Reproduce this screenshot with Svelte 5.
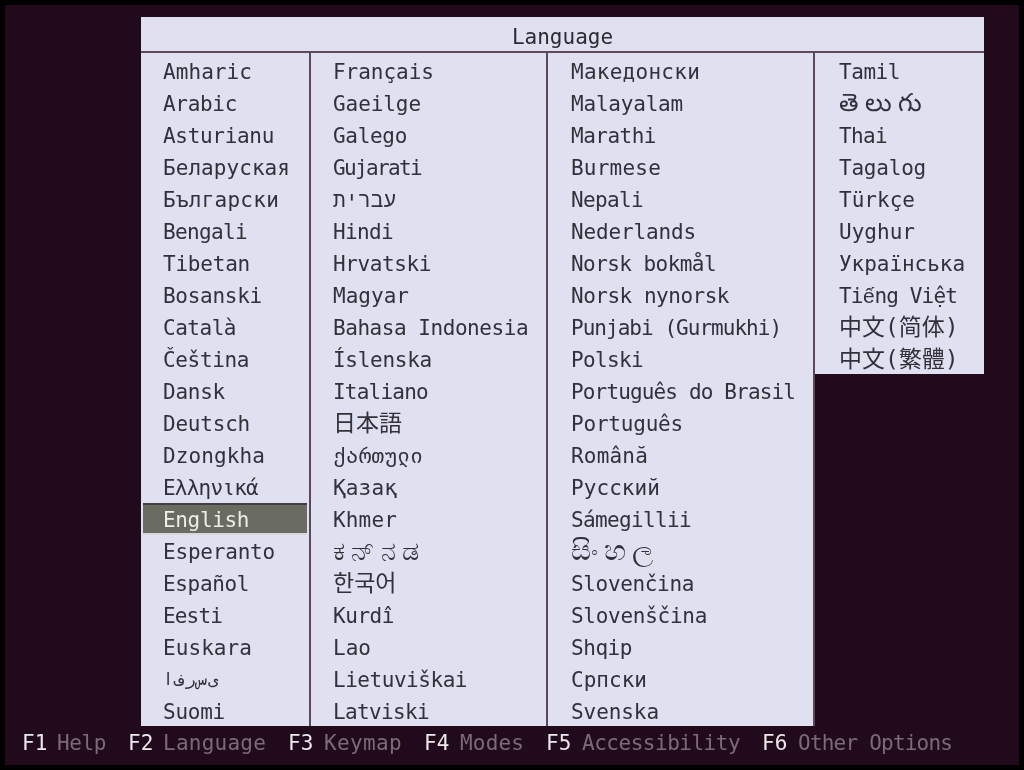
<script>
  const CELL = 12.64;
  const columns = [
    [['Amharic',89],['Arabic',74],['Asturianu',111],['Беларуская',127],['Български',116],['Bengali',84],['Tibetan',87],['Bosanski',99],['Català',73],['Čeština',86],['Dansk',62],['Deutsch',87],['Dzongkha',102],['Ελληνικά',95],['English',86],['Esperanto',112],['Español',86],['Eesti',59],['Euskara',89],['فارسی',0,'arabic'],['Suomi',62]],
    [['Français',101],['Gaeilge',88],['Galego',74],['Gujarati',88],['עברית',0,'hebrew'],['Hindi',60],['Hrvatski',98],['Magyar',76],['Bahasa Indonesia',195],['Íslenska',99],['Italiano',95],['日本語',0,'large'],['ქართული',90],['Қазақ',64],['Khmer',64],['ಕನ್\u200Cನಡ',0,'kn'],['한국어',0,'large'],['Kurdî',61],['Lao',38],['Lietuviškai',134],['Latviski',96]],
    [['Македонски',129],['Malayalam',112],['Marathi',85],['Burmese',90],['Nepali',72],['Nederlands',125],['Norsk bokmål',145],['Norsk nynorsk',158],['Punjabi (Gurmukhi)',210],['Polski',72],['Português do Brasil',224],['Português',112],['Română',77],['Русский',89],['Sámegillii',120],['සිංහල',0,'si'],['Slovenčina',123],['Slovenščina',136],['Shqip',61],['Српски',76],['Svenska',88]],
    [['Tamil',61],['తెలుగు',0,'te'],['Thai',48],['Tagalog',87],['Türkçe',76],['Uyghur',76],['Українська',126],['Tiếng Việt',118,'viet'],['中文(简体)',0,'large'],['中文(繁體)',0,'large']]
  ];
  const arabicVisual = ['ا', 'ف', 'ر', 'س', 'ی'];
  const keys = [['F1','Help',49,35],['F2','Language',103,35],['F3','Keymap',78,36],['F4','Modes',64,36],['F5','Accessibility',158,36],['F6','Other Options',154,36]];
  const widths = ['c1','c2','c3','c4'];
  function sp(name, target) {
    if (!target) return '';
    const n = name.length;
    return `letter-spacing:${((target - n * CELL) / n).toFixed(2)}px`;
  }
</script>

<div class="screen">
  <div class="frame">
    <div class="panel">
      <div class="title">Language</div>
      <div class="cols">
        {#each columns as col, i}
          <ul class={'col ' + widths[i]}>
            {#each col as [name, target, kind]}
              {#if kind === 'viet'}
                <li style={sp(name, target)}>Ti<span class="viet">ế</span>ng Việt</li>
              {:else if kind === 'arabic'}
                <li class="arabic">{#each arabicVisual as ch}<span>{ch}</span>{/each}</li>
              {:else}
                <li class={name === 'English' ? 'sel' : kind} style={sp(name, target)}>{name}</li>
              {/if}
            {/each}
          </ul>
        {/each}
      </div>
    </div>
    <div class="keys">
      {#each keys as [k, label, target, kw]}
        <span class="key"><b style={`width:${kw}px`}>{k}</b><span style={sp(label, target)}>{label}</span></span>
      {/each}
    </div>
  </div>
</div>

<style>
  :global(body) { margin: 0; background: #000; }
  .screen {
    width: 1024px; height: 770px; box-sizing: border-box; padding: 5px; background: #000; overflow: hidden;
    font-family: "DejaVu Sans Mono", "Noto Sans CJK JP", "Noto Sans", monospace;
    font-size: 21px;
  }
  .frame { height: 760px; background: #200a1b; padding-top: 12px; box-sizing: border-box; filter: blur(0.45px); }
  .panel { margin-left: 136px; width: 843px; }
  .title {
    height: 34px; line-height: 40px; text-align: center; background: #dfe0f0; color: #2c2a32;
    border-bottom: 2px solid #5c4857;
  }
  .cols { display: flex; align-items: flex-start; }
  .col {
    list-style: none; margin: 0; padding: 2px 0 0; background: #dfe0f0; color: #33303a;
    box-sizing: border-box; border-right: 2px solid #5c4857;
  }
  .c1 { width: 170px; }
  .c2 { width: 237px; }
  .c3 { width: 267px; }
  .c4 { width: 169px; height: 321px; overflow: hidden; border-right: 0; }
  .c1, .c2, .c3 { height: 673px; overflow: hidden; }
  .c3 li { padding-left: 23px; }
  .c4 li { padding-left: 24px; }
  li { height: 32px; line-height: 34px; padding-left: 22px; white-space: nowrap; box-sizing: border-box; }
  li.sel {
    margin: 0 0 0 2px; padding-left: 20px; line-height: 30px; width: 164px;
    background: #6a6c62; color: #eceee6; border-top: 2px solid #453c46; border-bottom: 2px solid #d8d8da;
  }
  li.large { font-size: 23px; line-height: 33px; }
  li.hebrew { font-family: "Liberation Mono", monospace; line-height: 37px; }
  li.te { font-size: 25px; letter-spacing: 6.5px; line-height: 32px; }
  li.kn { font-size: 27px; letter-spacing: 6px; line-height: 32px; }
  li.si { font-size: 28px; letter-spacing: 6px; line-height: 32px; }
  li.arabic { display: flex; font-size: 17px; line-height: 32px; gap: 1px; }
  .viet { font-family: "Liberation Mono", monospace; }
  .keys { display: flex; gap: 22px; padding-left: 17px; margin-top: 1px; line-height: 32px; }
  .key { display: flex; }
  .key b { font-weight: normal; color: #ece8ea; }
  .key span { color: #7c6a78; }
</style>
